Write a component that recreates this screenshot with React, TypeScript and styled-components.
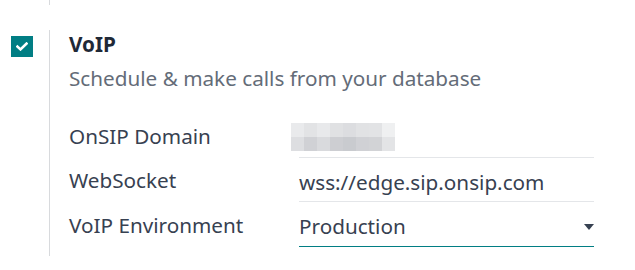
import React from "react";
import styled, { createGlobalStyle } from "styled-components";

const GlobalStyle = createGlobalStyle`
  html, body { margin: 0; padding: 0; background: #ffffff; }
  body {
    font-family: "Noto Sans", "Open Sans", sans-serif;
    font-size: 20.7px;
    color: #374151;
    -webkit-font-smoothing: antialiased;
  }
`;

const Page = styled.div`
  width: 635px;
  height: 270px;
  overflow: hidden;
`;

const PrevTail = styled.div`
  margin-left: 49px;
  height: 5px;
  border-left: 1px solid #d8dadd;
  margin-bottom: 25px;
`;

const Setting = styled.div`
  display: flex;
  align-items: stretch;
`;

const CheckCol = styled.div`
  width: 49px;
  padding: 6px 0 0 11px;
  box-sizing: border-box;
  flex: none;
`;

const CheckBox = styled.div`
  width: 22px;
  height: 21px;
  background: #017e84;
  display: flex;
  align-items: center;
  justify-content: center;
`;

const Content = styled.div`
  border-left: 1px solid #d8dadd;
  padding: 0 0 9px 19px;
  flex: 1;
`;

const Title = styled.div`
  font-weight: 700;
  line-height: 28px;
  color: #1f2937;
  margin-bottom: 6px;
`;

const Subtitle = styled.div`
  line-height: 28px;
  color: #646c78;
  margin-bottom: 21px;
`;

const Row = styled.div`
  display: flex;
  height: 44.5px;
`;

const Label = styled.div`
  width: 230px;
  flex: none;
  padding-top: 8.5px;
  line-height: 28px;
  color: #374151;
`;

const Value = styled.div<{ $focused?: boolean }>`
  width: 295px;
  flex: none;
  box-sizing: border-box;
  padding-top: 10px;
  line-height: 28px;
  border-bottom: 1px solid ${(p) => (p.$focused ? "#017e84" : "#e4e6e9")};
  color: #374151;
  position: relative;
  display: flex;
  align-items: flex-start;
  justify-content: space-between;
`;

const Blur = styled.div`
  position: absolute;
  left: -8px;
  top: 10px;
  display: grid;
  grid-template-columns: repeat(8, 13px);
  grid-template-rows: repeat(2, 14px);
  width: 105px;
`;

const Cell = styled.div<{ $c: string }>`
  background: ${(p) => p.$c};
`;

const Caret = styled.div`
  width: 0;
  height: 0;
  margin-top: 12px;
  border-left: 5.5px solid transparent;
  border-right: 5.5px solid transparent;
  border-top: 6px solid #374151;
`;

const blurColors = [
  "#e9eaec", "#e2e3e5", "#e8e9eb", "#e0e1e3", "#dcdde0", "#e1e2e4", "#e2e3e5", "#eff0f1",
  "#dddee1", "#d0d1d5", "#d9dadd", "#cdced2", "#c9cbcf", "#d0d1d5", "#d2d3d6", "#e3e4e6",
];

export default function App() {
  return (
    <Page>
      <GlobalStyle />
      <PrevTail />
      <Setting>
        <CheckCol>
          <CheckBox>
            <svg width="12" height="9" viewBox="0 0 12 9">
              <path d="M1.5 4.6 L4.5 7.4 L10.5 1.6" fill="none" stroke="#ffffff" strokeWidth="2.6" strokeLinecap="square" />
            </svg>
          </CheckBox>
        </CheckCol>
        <Content>
          <Title>VoIP</Title>
          <Subtitle>Schedule &amp; make calls from your database</Subtitle>
          <Row>
            <Label>OnSIP Domain</Label>
            <Value>
              <Blur>
                {blurColors.map((c, i) => (
                  <Cell key={i} $c={c} />
                ))}
              </Blur>
            </Value>
          </Row>
          <Row>
            <Label>WebSocket</Label>
            <Value>wss://edge.sip.onsip.com</Value>
          </Row>
          <Row>
            <Label>VoIP Environment</Label>
            <Value $focused>
              <span>Production</span>
              <Caret />
            </Value>
          </Row>
        </Content>
      </Setting>
    </Page>
  );
}
